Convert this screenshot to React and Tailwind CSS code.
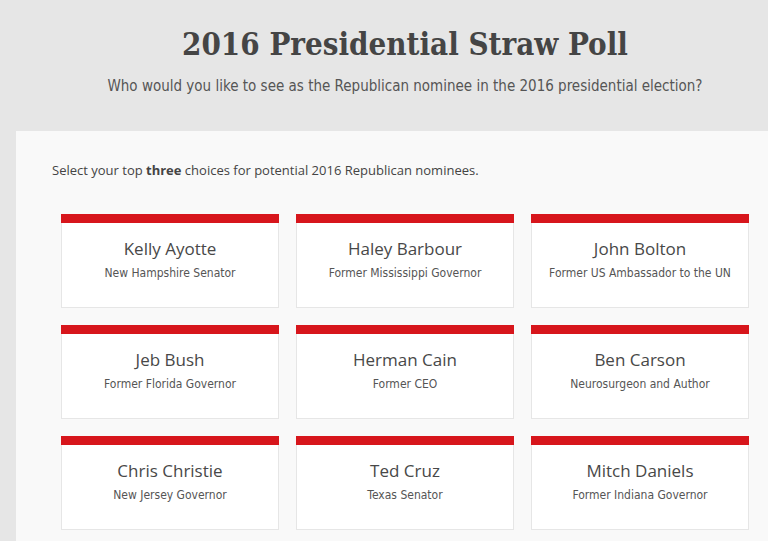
import React from "react";

const candidates = [
  { name: "Kelly Ayotte", role: "New Hampshire Senator" },
  { name: "Haley Barbour", role: "Former Mississippi Governor" },
  { name: "John Bolton", role: "Former US Ambassador to the UN" },
  { name: "Jeb Bush", role: "Former Florida Governor" },
  { name: "Herman Cain", role: "Former CEO" },
  { name: "Ben Carson", role: "Neurosurgeon and Author" },
  { name: "Chris Christie", role: "New Jersey Governor" },
  { name: "Ted Cruz", role: "Texas Senator" },
  { name: "Mitch Daniels", role: "Former Indiana Governor" },
];

export default function App() {
  return (
    <div className="w-full h-[541px] overflow-hidden bg-[#e6e6e6]">
      <div className="w-[810px]">
        <div className="flex flex-col items-center pt-[24px] h-[131px]">
          <h1 className="text-[31px] leading-[40px] font-bold text-[#454545] [font-family:'DejaVu_Serif_Condensed','DejaVu_Serif',serif]">
            2016 Presidential Straw Poll
          </h1>
          <p className="mt-[12px] text-[15px] leading-[20px] text-[#555] [font-family:'Liberation_Sans_Narrow','DejaVu_Sans_Condensed',sans-serif]">
            Who would you like to see as the Republican nominee in the 2016 presidential election?
          </p>
        </div>
        <div className="mx-[16px] bg-[#f9f9f9] pt-[29px] px-[45px] pb-[30px] [font-family:'Open_Sans',sans-serif]">
          <p className="ml-[-9px] text-[13px] leading-[20px] text-[#444]">
            Select your top <span className="font-bold">three</span> choices for potential 2016 Republican nominees.
          </p>
          <div className="mt-[34px] grid grid-cols-3 gap-x-[17px] gap-y-[17px]">
            {candidates.map((c) => (
              <div key={c.name} className="h-[94px] bg-white border border-[#e6e6e6] border-t-0 flex flex-col">
                <div className="h-[9px] bg-[#d7161c] -mx-px"></div>
                <div className="flex flex-col items-center pt-[14px]">
                  <p className="text-[17px] leading-[24px] text-[#484848]">{c.name}</p>
                  <p className="mt-[2px] text-[12px] leading-[20px] text-[#555] [font-family:'Liberation_Sans_Narrow','DejaVu_Sans_Condensed',sans-serif]">
                    {c.role}
                  </p>
                </div>
              </div>
            ))}
          </div>
        </div>
      </div>
    </div>
  );
}
